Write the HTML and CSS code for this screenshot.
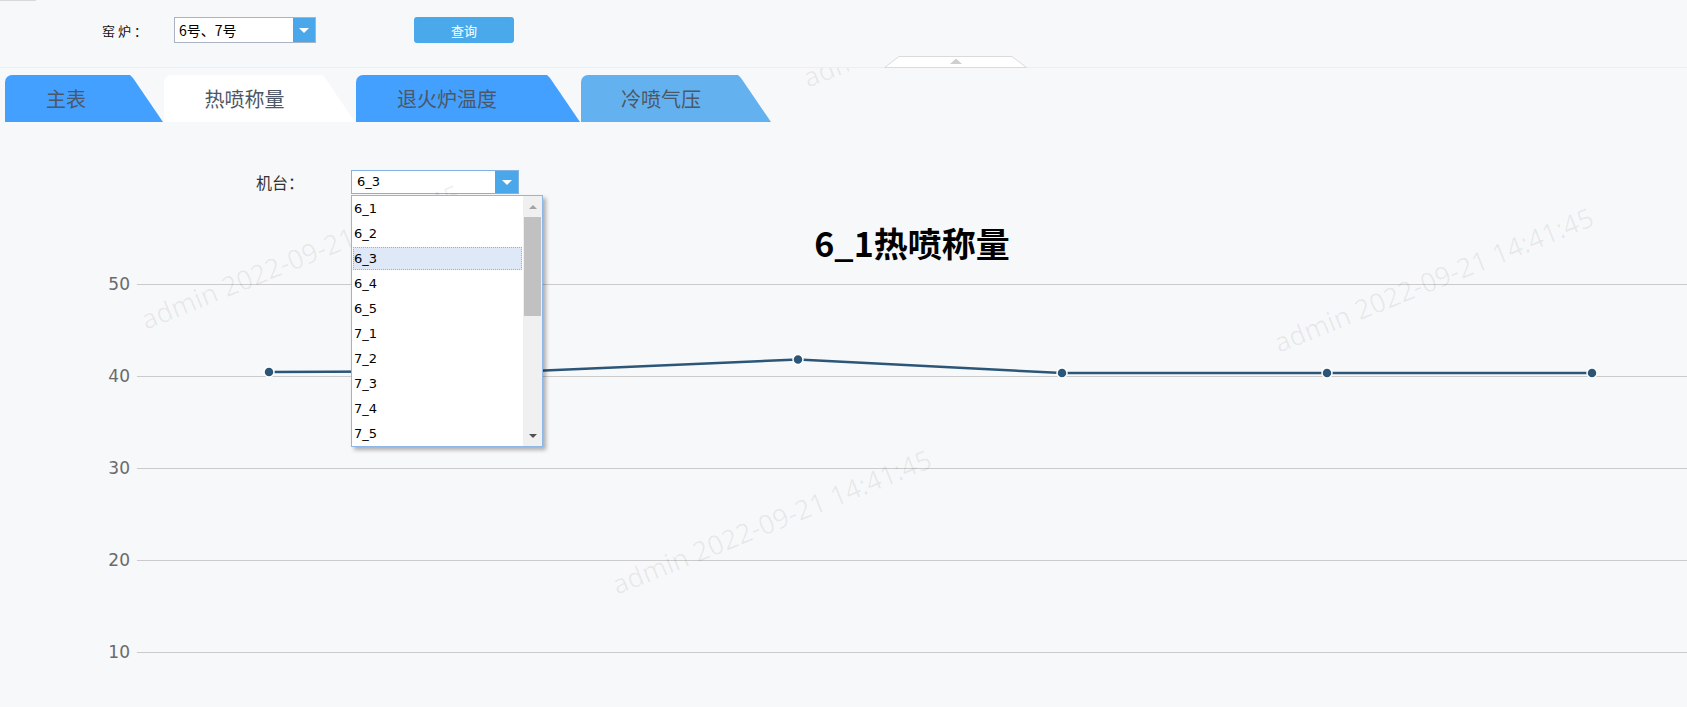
FILE: index.html
```html
<!DOCTYPE html>
<html lang="zh-CN">
<head>
<meta charset="utf-8">
<title>热喷称量</title>
<link rel="stylesheet" href="styles.css">
</head>
<body>
<header class="header">
  <div class="corner-line"></div>
  <div class="toolbar">
    <span class="toolbar-label">窑炉：</span>
    <div class="combo combo-kiln">
      <span class="combo-text">6号、7号</span>
      <span class="combo-btn"><i class="caret"></i></span>
    </div>
    <button class="btn-query" type="button">查询</button>
  </div>
  <svg class="collapse-handle" viewBox="0 0 143 12" width="143" height="12">
    <polygon points="0.5,11.5 15,0.5 128,0.5 142.5,11.5" fill="#ffffff" stroke="#dadada" stroke-width="1"/>
    <polygon points="66,8 72,2.5 78,8" fill="#cfcfcf"/>
  </svg>
</header>

<nav class="tabs">
  <div class="tab tab-main">主表</div>
  <div class="tab tab-spray active">热喷称量</div>
  <div class="tab tab-anneal">退火炉温度</div>
  <div class="tab tab-cold light">冷喷气压</div>
</nav>

<main class="panel">
  <div class="filter">
    <span class="filter-label">机台：</span>
    <div class="combo-wrap">
      <div class="combo combo-machine">
        <span class="combo-text">6_3</span>
        <span class="combo-btn"><i class="caret"></i></span>
      </div>
      <div class="dropdown">
        <ul class="options">
          <li>6_1</li>
          <li>6_2</li>
          <li class="selected">6_3</li>
          <li>6_4</li>
          <li>6_5</li>
          <li>7_1</li>
          <li>7_2</li>
          <li>7_3</li>
          <li>7_4</li>
          <li>7_5</li>
        </ul>
        <div class="scrollbar">
          <span class="sb-btn sb-up"></span>
          <span class="sb-thumb"></span>
          <span class="sb-space"></span>
          <span class="sb-btn sb-down"></span>
        </div>
      </div>
    </div>
  </div>

  <svg class="chart" viewBox="0 0 1687 513" width="1687" height="513">
    <text class="chart-title" x="912" y="63" text-anchor="middle">6_1热喷称量</text>
    <g class="grid" stroke="#cbcbcb" stroke-width="1">
      <line x1="137" y1="90.5" x2="1687" y2="90.5"/>
      <line x1="137" y1="182.5" x2="1687" y2="182.5"/>
      <line x1="137" y1="274.5" x2="1687" y2="274.5"/>
      <line x1="137" y1="366.5" x2="1687" y2="366.5"/>
      <line x1="137" y1="458.5" x2="1687" y2="458.5"/>
    </g>
    <g class="axis-labels" text-anchor="end">
      <text x="130" y="96">50</text>
      <text x="130" y="188">40</text>
      <text x="130" y="280">30</text>
      <text x="130" y="372">20</text>
      <text x="130" y="464">10</text>
    </g>
    <polyline points="269,178 533,177 798,165.5 1062,179 1327,179 1592,179" fill="none" stroke="#2c5678" stroke-width="2.5" stroke-linejoin="round"/>
    <g fill="#2c5678" stroke="#ffffff" stroke-width="1.5">
      <circle cx="269" cy="178" r="5"/>
      <circle cx="533" cy="177" r="5"/>
      <circle cx="798" cy="165.5" r="5"/>
      <circle cx="1062" cy="179" r="5"/>
      <circle cx="1327" cy="179" r="5"/>
      <circle cx="1592" cy="179" r="5"/>
    </g>
  </svg>
</main>

<div class="watermarks">
  <span class="wm wm-1">admin 2022-09-21 14:41:45</span>
  <span class="wm wm-2">admin 2022-09-21 14:41:45</span>
  <span class="wm wm-3">admin 2022-09-21 14:41:45</span>
  <span class="wm wm-4">admin 2022-09-21 14:41:45</span>
</div>
</body>
</html>
```

FILE: styles.css
```css
html, body {
  margin: 0;
  padding: 0;
}

body {
  position: relative;
  width: 1687px;
  height: 707px;
  overflow: hidden;
  background: #f7f8fa;
  font-family: "Noto Sans CJK SC", "Liberation Sans", sans-serif;
}

/* ---------- header toolbar ---------- */
.header {
  position: relative;
  z-index: 2;
  height: 67px;
  background: #f7f8fa;
  border-bottom: 1px solid #eceef1;
}

.corner-line {
  width: 36px;
  height: 1px;
  background: #d8d8d8;
}

.toolbar {
  display: flex;
  align-items: center;
  height: 26px;
  margin-top: 16px;
  padding-left: 102px;
}

.toolbar-label {
  width: 72px;
  font-size: 13px;
  letter-spacing: 3px;
  color: #111;
}

.combo {
  display: flex;
  box-sizing: border-box;
  background: #fff;
  border: 1px solid #a9b3c3;
}

.combo-kiln {
  width: 142px;
  height: 26px;
}

.combo-text {
  flex: 1;
  padding-left: 4px;
  font-size: 14px;
  line-height: 24px;
  color: #000;
}

.combo-btn {
  width: 22px;
  background: #4aa8ea;
  display: flex;
  align-items: center;
  justify-content: center;
}

.caret {
  width: 0;
  height: 0;
  border-left: 5px solid transparent;
  border-right: 5px solid transparent;
  border-top: 5px solid #fff;
}

.btn-query {
  margin-left: 98px;
  width: 100px;
  height: 26px;
  padding: 0;
  border: 0;
  border-radius: 3px;
  background: #4aa9ea;
  color: #fff;
  font-family: "Noto Sans CJK SC", sans-serif;
  font-size: 13px;
}

.collapse-handle {
  position: absolute;
  left: 884px;
  top: 56px;
  display: block;
}

/* ---------- tabs ---------- */
.tabs {
  display: flex;
  gap: 1px;
  height: 47px;
  margin-top: 7px;
  padding-left: 5px;
}

.tab {
  box-sizing: border-box;
  height: 47px;
  padding-right: 30px;
  text-align: center;
  line-height: 47px;
  font-size: 20px;
  color: #4d5767;
  background: #43a0fe;
  border-top-left-radius: 7px;
  clip-path: polygon(0 0, calc(100% - 33px) 0, calc(100% - 30px) 3px, 100% 100%, 0 100%);
}

.tab-main { width: 158px; padding-right: 36px; }
.tab-spray { width: 191px; }
.tab-anneal { width: 224px; padding-right: 42px; }
.tab-cold { width: 190px; }

.tab.active {
  background: #ffffff;
}

.tab.light {
  background: #63b2ef;
}

/* ---------- panel ---------- */
.filter {
  display: flex;
  align-items: center;
  height: 24px;
  margin-top: 48px;
  padding-left: 256px;
}

.filter-label {
  width: 95px;
  font-size: 16px;
  color: #333;
}

.combo-wrap {
  position: relative;
}

.combo-machine {
  width: 168px;
  height: 24px;
  border-color: #84b3e3;
}

.combo-machine .combo-text {
  font-family: "DejaVu Sans", sans-serif;
  font-size: 13px;
  line-height: 22px;
  padding-left: 5px;
}

.combo-machine .combo-btn {
  width: 23px;
}

.dropdown {
  position: absolute;
  z-index: 3;
  left: 0;
  top: 25px;
  width: 192px;
  height: 252px;
  box-sizing: border-box;
  display: flex;
  background: #fff;
  border: 1px solid #8db7e4;
  box-shadow: 3px 3px 4px rgba(0, 0, 0, 0.3);
}

.options {
  flex: 1;
  list-style: none;
  margin: 0;
  padding: 0;
  font-family: "DejaVu Sans", sans-serif;
  font-size: 13px;
  color: #000;
}

.options li {
  height: 25px;
  line-height: 25px;
  padding-left: 2px;
}

.options li.selected {
  box-sizing: border-box;
  height: 23px;
  margin: 1px;
  line-height: 21px;
  padding-left: 0;
  border: 1px dotted #8fb1dd;
  background: #dfe8f6;
}

.scrollbar {
  width: 19px;
  display: flex;
  flex-direction: column;
  align-items: center;
  background: #f0f0f0;
}

.sb-btn {
  height: 21px;
  width: 19px;
  display: flex;
  align-items: center;
  justify-content: center;
}

.sb-up::before {
  content: "";
  border-left: 4px solid transparent;
  border-right: 4px solid transparent;
  border-bottom: 4px solid #a3a3a3;
}

.sb-down::before {
  content: "";
  border-left: 4px solid transparent;
  border-right: 4px solid transparent;
  border-top: 4px solid #505050;
}

.sb-thumb {
  width: 17px;
  height: 99px;
  background: #c1c1c1;
}

.sb-space {
  flex: 1;
}

/* ---------- chart ---------- */
.chart {
  display: block;
}

.chart-title {
  font-family: "Noto Sans CJK SC", sans-serif;
  font-size: 34px;
  font-weight: 700;
  fill: #000;
}

.axis-labels {
  font-family: "DejaVu Sans", sans-serif;
  font-size: 17px;
  fill: #6a6a6a;
}

/* ---------- watermark overlay ---------- */
.watermarks {
  position: absolute;
  inset: 0;
  z-index: 1;
  overflow: hidden;
  pointer-events: none;
}

.wm {
  position: absolute;
  font-family: "Open Sans", sans-serif;
  font-size: 27px;
  line-height: 27px;
  color: rgba(0, 0, 0, 0.065);
  white-space: nowrap;
  transform-origin: 0 24px;
  transform: rotate(-22deg);
}

.wm-1 { left: 808px; top: 64px; }
.wm-2 { left: 146px; top: 306px; }
.wm-3 { left: 1279px; top: 329px; }
.wm-4 { left: 617px; top: 571px; }
```
